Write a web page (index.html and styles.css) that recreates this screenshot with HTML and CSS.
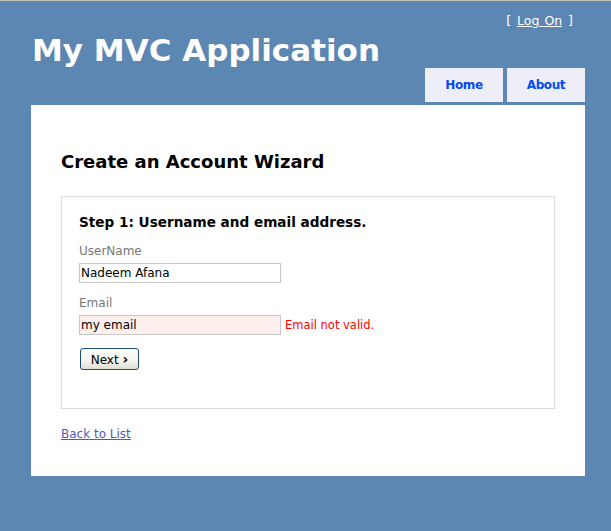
FILE: index.html
```html
<!DOCTYPE html>
<html>
<head>
<meta charset="utf-8">
<title>Create an Account Wizard</title>
<link rel="stylesheet" href="styles.css">
</head>
<body>
<div class="page">
  <header class="header">
    <div class="logon">[ <a class="logon-link" href="#">Log On</a> ]</div>
    <h1 class="title">My MVC Application</h1>
    <nav class="menu">
      <a class="tab" href="#">Home</a>
      <a class="tab" href="#">About</a>
    </nav>
  </header>
  <main class="main">
    <h2 class="heading">Create an Account Wizard</h2>
    <fieldset class="wizard">
      <h3 class="step">Step 1: Username and email address.</h3>
      <div class="label label-first">UserName</div>
      <div class="field">
        <input class="input" type="text" value="Nadeem Afana">
      </div>
      <div class="label">Email</div>
      <div class="field">
        <input class="input input-error" type="text" value="my email">
        <span class="error">Email not valid.</span>
      </div>
      <div class="actions">
        <button class="btn" type="button">Next <span class="chev">›</span></button>
      </div>
    </fieldset>
    <a class="back" href="#">Back to List</a>
  </main>
</div>
</body>
</html>
```

FILE: styles.css
```css
html, body {
  margin: 0;
  padding: 0;
}
body {
  background: #5c87b2;
  border-top: 1px solid #c4c2bc;
  font-family: "DejaVu Sans", Verdana, sans-serif;
  font-size: 12px;
  min-height: 530px;
}
.page {
  margin-left: 31px;
  width: 554px;
}
.header {
  display: flex;
  flex-direction: column;
  padding-top: 13px;
}
.logon {
  align-self: flex-end;
  margin-right: 12px;
  color: #fff;
  font-size: 12.5px;
  line-height: 14px;
  word-spacing: 2px;
}
.logon-link {
  color: #fff;
  text-decoration: underline;
  word-spacing: 1px;
}
.title {
  margin: 6px 0 0 1px;
  color: #fff;
  font-size: 31px;
  line-height: 32px;
  font-weight: bold;
}
.menu {
  display: flex;
  justify-content: flex-end;
  gap: 4px;
  margin-top: 2px;
  margin-bottom: 3px;
}
.tab {
  width: 78px;
  height: 34px;
  display: flex;
  align-items: center;
  justify-content: center;
  background: #eeeef8;
  color: #034af3;
  font-weight: bold;
  font-size: 12px;
  letter-spacing: -0.4px;
  text-decoration: none;
}
.main {
  background: #fff;
  padding: 30px 30px 35px 30px;
}
.heading {
  margin: 16px 0 24px 0;
  font-size: 18px;
  line-height: 21px;
  font-weight: bold;
  color: #000;
}
.wizard {
  margin: 0;
  padding: 17px 17px 38px 17px;
  border: 1px solid #dddddd;
  min-width: 0;
}
.step {
  margin: 0;
  font-size: 13.6px;
  line-height: 16px;
  font-weight: bold;
  color: #000;
}
.label {
  margin-top: 13px;
  line-height: 14px;
  color: #777;
}
.label-first {
  margin-top: 14px;
}
.field {
  display: flex;
  align-items: center;
  gap: 4px;
  margin-top: 5px;
}
.input {
  box-sizing: border-box;
  width: 202px;
  height: 20px;
  margin: 0;
  padding: 0 1px;
  border: 1px solid #c8c8c8;
  font-family: "DejaVu Sans", Verdana, sans-serif;
  font-size: 12px;
  color: #000;
  background: #fff;
  outline: none;
}
.input-error {
  background: #ffeeee;
}
.error {
  color: #ff0000;
  font-size: 11.5px;
  line-height: 14px;
}
.actions {
  display: flex;
  margin-top: 13px;
  padding-left: 1px;
}
.btn {
  box-sizing: border-box;
  width: 59px;
  height: 22px;
  margin: 0;
  padding: 0;
  border: 1px solid #1c4a7a;
  border-radius: 3px;
  background: linear-gradient(#fdfdfb, #f3f2ec 60%, #e2dfd3);
  font-family: "DejaVu Sans", Verdana, sans-serif;
  font-size: 12px;
  color: #000;
  line-height: 18px;
}
.chev {
  font-weight: bold;
  font-size: 14px;
}
.back {
  display: block;
  width: max-content;
  margin-top: 18px;
  line-height: 14px;
  color: #505abc;
  text-decoration: underline;
}
```
